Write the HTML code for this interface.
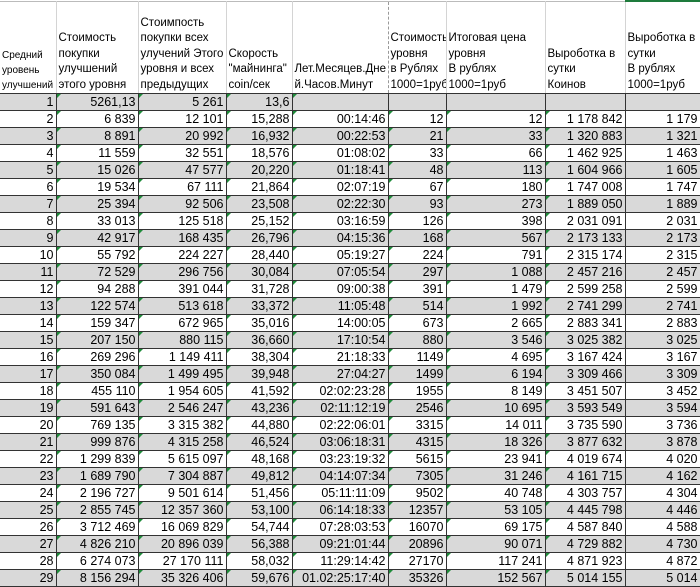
<!DOCTYPE html>
<html><head><meta charset="utf-8"><style>
body{margin:0;width:700px;height:586px;overflow:hidden;background:#fff;font-family:"Liberation Sans",sans-serif;}
table{border-collapse:collapse;table-layout:fixed;position:absolute;left:0;top:0;width:700px;}
td{padding:0 2px;overflow:hidden;white-space:nowrap;position:relative;}
tr.h td{height:91px;vertical-align:bottom;font-size:11.5px;line-height:15.5px;white-space:nowrap;border-right:1px solid #d4d4d4;border-top:1px solid #bbb;border-bottom:1px solid #333;padding:0 2px 0 2px;text-align:left;}
tr.d td{height:16px;font-size:12.5px;line-height:16px;text-align:right;border:1px solid #333;}
tr.d:nth-child(even) td{background:#d9d9d9;}
tr.d td.t::before{content:"";position:absolute;left:0;top:0;border-top:4px solid #1e8c3a;border-right:4px solid transparent;}
td.e{border-right:1px dashed #999 !important;}
</style></head><body>
<table>
<colgroup><col style="width:56px"><col style="width:82px"><col style="width:88px"><col style="width:66px"><col style="width:96px"><col style="width:58px"><col style="width:99px"><col style="width:80px"><col style="width:75px"></colgroup>
<tr class="h"><td style="font-size:10px;line-height:15px">Средний<br>уровень<br>улучшений</td><td>Стоимость<br>покупки<br>улучшений<br>этого уровня</td><td>Стоимпость<br>покупки всех<br>улучений Этого<br>уровня и всех<br>предыдущих</td><td>Скорость<br>"майнинга"<br>coin/сек</td><td class="e">Лет.Месяцев.Дне<br>й.Часов.Минут</td><td>Стоимость<br>уровня<br>в Рублях<br>1000=1руб</td><td>Итоговая цена<br>уровня<br>В рублях<br>1000=1руб</td><td>Выроботка в<br>сутки<br>Коинов</td><td style="border-top:2px solid #1e7b3c">Выроботка в<br>сутки<br>В рублях<br>1000=1руб</td></tr>
</table>
<script>
var rows=`1|5261,13|5 261|13,6|||||
2|6 839|12 101|15,288|00:14:46|12|12|1 178 842|1 179
3|8 891|20 992|16,932|00:22:53|21|33|1 320 883|1 321
4|11 559|32 551|18,576|01:08:02|33|66|1 462 925|1 463
5|15 026|47 577|20,220|01:18:41|48|113|1 604 966|1 605
6|19 534|67 111|21,864|02:07:19|67|180|1 747 008|1 747
7|25 394|92 506|23,508|02:22:30|93|273|1 889 050|1 889
8|33 013|125 518|25,152|03:16:59|126|398|2 031 091|2 031
9|42 917|168 435|26,796|04:15:36|168|567|2 173 133|2 173
10|55 792|224 227|28,440|05:19:27|224|791|2 315 174|2 315
11|72 529|296 756|30,084|07:05:54|297|1 088|2 457 216|2 457
12|94 288|391 044|31,728|09:00:38|391|1 479|2 599 258|2 599
13|122 574|513 618|33,372|11:05:48|514|1 992|2 741 299|2 741
14|159 347|672 965|35,016|14:00:05|673|2 665|2 883 341|2 883
15|207 150|880 115|36,660|17:10:54|880|3 546|3 025 382|3 025
16|269 296|1 149 411|38,304|21:18:33|1149|4 695|3 167 424|3 167
17|350 084|1 499 495|39,948|27:04:27|1499|6 194|3 309 466|3 309
18|455 110|1 954 605|41,592|02:02:23:28|1955|8 149|3 451 507|3 452
19|591 643|2 546 247|43,236|02:11:12:19|2546|10 695|3 593 549|3 594
20|769 135|3 315 382|44,880|02:22:06:01|3315|14 011|3 735 590|3 736
21|999 876|4 315 258|46,524|03:06:18:31|4315|18 326|3 877 632|3 878
22|1 299 839|5 615 097|48,168|03:23:19:32|5615|23 941|4 019 674|4 020
23|1 689 790|7 304 887|49,812|04:14:07:34|7305|31 246|4 161 715|4 162
24|2 196 727|9 501 614|51,456|05:11:11:09|9502|40 748|4 303 757|4 304
25|2 855 745|12 357 360|53,100|06:14:18:33|12357|53 105|4 445 798|4 446
26|3 712 469|16 069 829|54,744|07:28:03:53|16070|69 175|4 587 840|4 588
27|4 826 210|20 896 039|56,388|09:21:01:44|20896|90 071|4 729 882|4 730
28|6 274 073|27 170 111|58,032|11:29:14:42|27170|117 241|4 871 923|4 872
29|8 156 294|35 326 406|59,676|01.02:25:17:40|35326|152 567|5 014 155|5 014`.split("\n");
var tb=document.querySelector("table tbody")||document.querySelector("table");
rows.forEach(function(r,i){var c=r.split("|");var tr=document.createElement("tr");tr.className="d";
c.forEach(function(v,j){var td=document.createElement("td");td.textContent=v;
if(j>=1&&j<=7&&!(i==0&&j>4))td.className="t";if(j==4)td.className+=" e";
if(j==0)td.style.borderLeft="none";
tr.appendChild(td);});tb.appendChild(tr);});
</script>
</body></html>
